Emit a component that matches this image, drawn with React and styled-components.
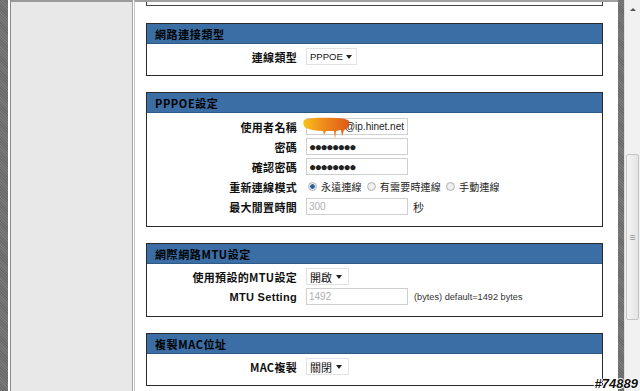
import React from 'react'
import styled, { createGlobalStyle } from 'styled-components'

const GlobalStyle = createGlobalStyle`
  html, body { margin: 0; padding: 0; background: #fff; }
  body { font-family: "Noto Sans CJK TC", "Liberation Sans", sans-serif; }
  *, *::before, *::after { box-sizing: border-box; }
`

const Screen = styled.div`
  position: relative;
  width: 640px;
  height: 391px;
  overflow: hidden;
  display: flex;
  background: #fff;
`
const Hatch = styled.div`
  width: ${({ w }) => w}px;
  flex: none;
  background: repeating-linear-gradient(45deg, #6a6a6a 0 1px, #7a7a7a 1px 2px);
`
const Sider = styled.div`
  width: 125px;
  flex: none;
  background: #e8e8e8;
  border-left: 2px solid #fff;
  box-shadow: inset 1px 0 0 #8a8a8a, inset -1px 0 0 #a8a8a8, inset 0 2px 0 #9a9a9a;
  margin-right: 1px;
`
const Main = styled.div`
  flex: 1;
  display: flex;
  flex-direction: column;
  gap: 16px;
  padding: 0 15px 0 11px;
  border-top: 2px solid #a0a0a0;
  border-left: 1px solid #c8c8c8;
  min-width: 0;
`
const TopStub = styled.div`
  height: 4px;
  flex: none;
  border: 1px solid #444;
  border-top: none;
  margin-bottom: 1px;
`
const Panel = styled.section`
  border: 1px solid #2a2a2a;
  flex: none;
`
const PanelHead = styled.div`
  height: 20px;
  background: #3b6ea5;
  border-bottom: 1px solid #2e5a88;
  display: flex;
  align-items: center;
  padding-left: 8px;
  font-size: 11px;
  font-weight: 700;
  letter-spacing: 0.6px;
  color: #000;
`
const PanelBody = styled.div`
  display: flex;
  flex-direction: column;
  gap: 3px;
  padding: ${({ pad }) => pad};
`
const Row = styled.div`
  display: grid;
  grid-template-columns: 150px 1fr;
  column-gap: 9px;
  align-items: center;
  height: 17px;
`
const Label = styled.div`
  text-align: right;
  font-size: 11px;
  font-weight: 700;
  color: #111;
  letter-spacing: 0.3px;
  font-family: ${({ latin }) => (latin ? '"Liberation Sans", sans-serif' : '"Noto Sans CJK TC", sans-serif')};
`
const Value = styled.div`
  display: flex;
  align-items: center;
  gap: 5px;
  font-size: 11px;
  color: #222;
  position: relative;
`
const Field = styled.div`
  width: 102px;
  height: 17px;
  border: 1px solid #cfcfcf;
  display: flex;
  align-items: center;
  padding-left: 2px;
  font-family: "Liberation Sans", sans-serif;
  font-size: ${({ dots }) => (dots ? '12px' : '10px')};
  letter-spacing: ${({ dots }) => (dots ? '-1.5px' : '0')};
  color: ${({ muted }) => (muted ? '#b0b0b0' : '#222')};
  justify-content: ${({ end }) => (end ? 'flex-end' : 'flex-start')};
  padding-right: ${({ end }) => (end ? '3px' : '0')};
  background: #fff;
`
const Select = styled.div`
  width: ${({ w }) => w}px;
  height: 17px;
  border: 1px solid #e2e2e2;
  display: flex;
  align-items: center;
  justify-content: space-between;
  gap: 3px;
  padding: 0 6px 0 3px;
  white-space: nowrap;
  font-size: ${({ latin }) => (latin ? '9.5px' : '11px')};
  font-family: ${({ latin }) => (latin ? '"Liberation Sans", sans-serif' : '"Noto Sans CJK TC", sans-serif')};
  color: #111;
`
const Caret = styled.span`
  flex: none;
  width: 0;
  height: 0;
  border-left: 3px solid transparent;
  border-right: 3px solid transparent;
  border-top: 4px solid #222;
`
const RadioGroup = styled.div`
  display: flex;
  align-items: center;
  gap: 5px;
  padding-left: 2px;
`
const Radio = styled.label`
  display: flex;
  align-items: center;
  gap: 4px;
  font-size: 10px;
  letter-spacing: 0.2px;
  color: #222;
`
const Dot = styled.span`
  width: 9px;
  height: 9px;
  border-radius: 50%;
  border: 1px solid #b4b4b4;
  background: ${({ on }) => (on ? 'radial-gradient(circle, #2f5f9a 0 2px, #dfe9f5 2.5px)' : 'radial-gradient(circle, #f0f0f0 0 2px, #e2e2e2 4px)')};
`
const Note = styled.span`
  font-family: "Liberation Sans", sans-serif;
  font-size: 9.2px;
  color: #333;
  margin-left: 1px;
`
const Smear = styled.svg`
  position: absolute;
  left: -4px;
  top: -2px;
`
const Scrollbar = styled.div`
  width: 16px;
  flex: none;
  background: #f1f1f1;
  border-left: 1px solid #e0e0e0;
  display: flex;
  flex-direction: column;
  align-items: center;
`
const Arrow = styled.span`
  margin-top: 8px;
  width: 0;
  height: 0;
  border-left: 3px solid transparent;
  border-right: 3px solid transparent;
  border-bottom: 3px solid #555;
`
const Thumb = styled.div`
  margin-top: 143px;
  width: 13px;
  height: 166px;
  border: 1px solid #c4c4c4;
  border-radius: 2px;
  background: linear-gradient(90deg, #f4f4f4, #e4e4e4);
  display: flex;
  align-items: center;
  justify-content: center;
  font-size: 7px;
  color: #666;
  line-height: 2px;
`
const Mark = styled.div`
  position: absolute;
  right: 2px;
  bottom: 0px;
  font-family: "Liberation Sans", sans-serif;
  font-size: 13px;
  font-weight: 700;
  font-style: italic;
  color: #111;
  text-shadow: 1px 0 0 #fff, -1px 0 0 #fff, 0 1px 0 #fff, 0 -1px 0 #fff;
`

const UserSmear = () => (
  <Smear width="50" height="24" viewBox="0 0 50 24">
    <defs>
      <linearGradient id="sm" x1="0" x2="1" y1="0" y2="0">
        <stop offset="0" stopColor="#f6c21a" />
        <stop offset="0.45" stopColor="#ef8a1c" />
        <stop offset="1" stopColor="#dd5a16" />
      </linearGradient>
    </defs>
    <path
      d="M2 4 C10 1 22 2 34 2 C40 2 45 3 47 5 C48 9 46 13 42 14 L40 20 L39 14 L34 15 L33 23 L32 15 L24 15 L22 19 L21 15 C14 15 8 14 4 12 C1 10 1 7 2 4 Z"
      fill="url(#sm)"
    />
  </Smear>
)

const App = () => (
  <>
    <GlobalStyle />
    <Screen>
      <Hatch w={8} />
      <Sider />
      <Main>
        <TopStub />
        <Panel>
          <PanelHead>網路連接類型</PanelHead>
          <PanelBody pad="4px 0 10px">
            <Row>
              <Label>連線類型</Label>
              <Value><Select w={51} latin>PPPOE<Caret /></Select></Value>
            </Row>
          </PanelBody>
        </Panel>
        <Panel>
          <PanelHead>PPPOE設定</PanelHead>
          <PanelBody pad="5px 0 11px">
            <Row>
              <Label>使用者名稱</Label>
              <Value>
                <Field end>@ip.hinet.net</Field>
                <UserSmear />
              </Value>
            </Row>
            <Row>
              <Label>密碼</Label>
              <Value><Field dots>●●●●●●●●</Field></Value>
            </Row>
            <Row>
              <Label>確認密碼</Label>
              <Value><Field dots>●●●●●●●●</Field></Value>
            </Row>
            <Row>
              <Label>重新連線模式</Label>
              <Value>
                <RadioGroup>
                  <Radio><Dot on />永遠連線</Radio>
                  <Radio><Dot />有需要時連線</Radio>
                  <Radio><Dot />手動連線</Radio>
                </RadioGroup>
              </Value>
            </Row>
            <Row>
              <Label>最大閒置時間</Label>
              <Value><Field muted>300</Field>秒</Value>
            </Row>
          </PanelBody>
        </Panel>
        <Panel>
          <PanelHead>網際網路MTU設定</PanelHead>
          <PanelBody pad="4px 0 11px">
            <Row>
              <Label>使用預設的MTU設定</Label>
              <Value><Select w={43}>開啟<Caret /></Select></Value>
            </Row>
            <Row>
              <Label latin>MTU Setting</Label>
              <Value><Field muted>1492</Field><Note>(bytes) default=1492 bytes</Note></Value>
            </Row>
          </PanelBody>
        </Panel>
        <Panel>
          <PanelHead>複製MAC位址</PanelHead>
          <PanelBody pad="4px 0 10px">
            <Row>
              <Label>MAC複製</Label>
              <Value><Select w={43}>關閉<Caret /></Select></Value>
            </Row>
          </PanelBody>
        </Panel>
      </Main>
      <Hatch w={6} />
      <Scrollbar>
        <Arrow />
        <Thumb>≡</Thumb>
      </Scrollbar>
      <Mark>#74889</Mark>
    </Screen>
  </>
)

export default App
